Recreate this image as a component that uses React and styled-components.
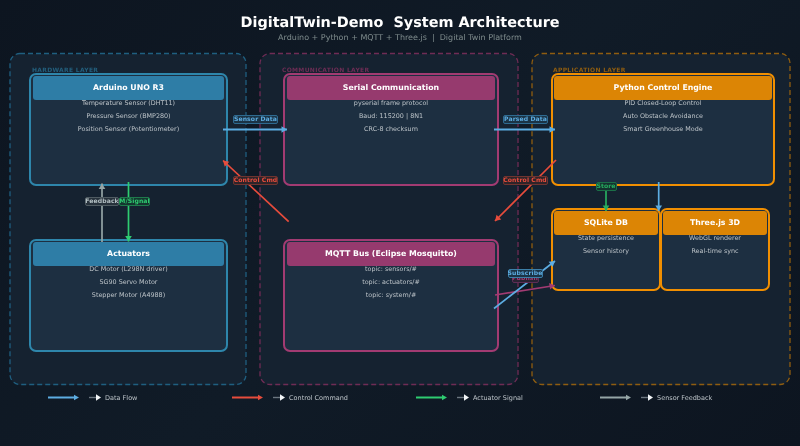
import React from "react";
import styled, { createGlobalStyle } from "styled-components";

const Global = createGlobalStyle`
  html, body { margin: 0; padding: 0; background: #0e1722; }
  #root { width: 800px; height: 446px; overflow: hidden; }
`;

const Page = styled.div`
  position: relative;
  width: 800px;
  height: 446px;
  overflow: hidden;
  background: linear-gradient(135deg, #0d1520 0%, #101b27 50%, #0d1520 100%);
  font-family: "DejaVu Sans", sans-serif;
  text-rendering: geometricPrecision;
  filter: blur(0.3px);
`;

const Header = styled.header`
  height: 54px;
  box-sizing: border-box;
  padding-top: 14px;
  text-align: center;
`;

const Title = styled.h1`
  margin: 0;
  font-size: 14.4px;
  line-height: 18px;
  font-weight: 700;
  color: #ffffff;
  white-space: pre;
`;

const Subtitle = styled.div`
  font-size: 8px;
  line-height: 12px;
  color: #7f8c8d;
  white-space: pre;
`;

const Columns = styled.main`
  display: flex;
  gap: 14px;
  height: 331px;
  padding-left: 10px;
`;

const Layer = styled.section`
  position: relative;
  box-sizing: border-box;
  width: ${(p) => p.$width}px;
  padding: 1px 0 0 ${(p) => p.$inset}px;
  background: #152230;
  border-radius: 10px;
`;

const DashFrame = styled.svg`
  position: absolute;
  left: 0;
  top: 0;
  width: 100%;
  height: 100%;
  overflow: visible;
`;

const LayerLabel = styled.div`
  height: 6px;
  margin-left: ${(p) => p.$shift}px;
  padding-top: 12px;
  font-size: 6px;
  line-height: 8px;
  font-weight: 700;
  letter-spacing: 0.3px;
  color: ${(p) => p.$color};
  white-space: nowrap;
`;

const Stack = styled.div`
  display: flex;
  flex-direction: column;
  gap: ${(p) => p.$gap}px;
  width: ${(p) => p.$width}px;
`;

const Card = styled.article`
  position: relative;
  box-sizing: border-box;
  width: ${(p) => p.$width || "auto"};
  height: ${(p) => p.$height}px;
  padding: 1px ${(p) => p.$pad}px;
  background: #1d2f41;
  border: 2px solid ${(p) => p.$border};
  border-radius: 7px;
`;

const CardHead = styled.div`
  height: 24px;
  line-height: 23px;
  text-align: center;
  font-size: 7.8px;
  font-weight: 700;
  color: #ffffff;
  background: ${(p) => p.$fill};
  border-radius: 3px;
  margin-bottom: -3px;
`;

const CardLine = styled.div`
  height: 13px;
  line-height: 13px;
  text-align: center;
  font-size: 6.4px;
  color: #bcc3c8;
  white-space: nowrap;
`;

const SubRow = styled.div`
  display: flex;
  & > * + * {
    margin-left: -1px;
  }
`;

const Legend = styled.footer`
  display: grid;
  grid-template-columns: repeat(4, 184px);
  padding: 6px 0 0 48px;
`;

const LegendItem = styled.div`
  display: flex;
  align-items: center;
  height: 13px;
`;

const LegendText = styled.span`
  margin-left: 4px;
  font-size: 6.5px;
  color: #bcc3c8;
  white-space: nowrap;
`;

const Overlay = styled.svg`
  position: absolute;
  left: 0;
  top: 0;
  width: 800px;
  height: 446px;
  pointer-events: none;
`;

const FlowTag = styled.span`
  position: absolute;
  left: ${(p) => p.$x}px;
  top: ${(p) => p.$y}px;
  width: ${(p) => p.$w}px;
  height: 9px;
  box-sizing: border-box;
  display: flex;
  align-items: center;
  justify-content: center;
  font-size: 6.1px;
  font-weight: 700;
  letter-spacing: 0.1px;
  color: ${(p) => p.$color};
  background: ${(p) => p.$bg};
  border: 1px solid ${(p) => p.$edge};
  border-radius: 2px;
  white-space: nowrap;
`;

const BLUE = "#5dade2";
const RED = "#e74c3c";
const GREEN = "#2ecc71";
const GREY = "#95a5a6";
const PINK = "#a23b72";
const DGREEN = "#27ae60";

function Head({ x1, y1, x2, y2, color, size = 5.5 }) {
  const a = Math.atan2(y2 - y1, x2 - x1);
  const w = size * 0.6;
  const bx = x2 - Math.cos(a) * size;
  const by = y2 - Math.sin(a) * size;
  const px = -Math.sin(a) * w;
  const py = Math.cos(a) * w;
  return <polygon points={`${x2},${y2} ${bx + px},${by + py} ${bx - px},${by - py}`} fill={color} />;
}

function Flow({ x1, y1, x2, y2, color, width = 1.7 }) {
  return (
    <g>
      <line x1={x1} y1={y1} x2={x2} y2={y2} stroke={color} strokeWidth={width} />
      <Head x1={x1} y1={y1} x2={x2} y2={y2} color={color} />
    </g>
  );
}

const flows = [
  { x1: 223, y1: 129.5, x2: 287, y2: 129.5, color: BLUE, width: 2 },
  { x1: 494, y1: 129.5, x2: 555, y2: 129.5, color: BLUE, width: 2 },
  { x1: 288.7, y1: 221.7, x2: 223, y2: 160.5, color: RED },
  { x1: 556, y1: 160, x2: 495, y2: 221, color: RED },
  { x1: 102, y1: 242, x2: 102, y2: 183.5, color: GREY },
  { x1: 128.5, y1: 182, x2: 128.5, y2: 241.5, color: GREEN },
  { x1: 606, y1: 186, x2: 606, y2: 211, color: DGREEN },
  { x1: 658.7, y1: 182, x2: 658.7, y2: 211, color: BLUE },
  { x1: 495, y1: 295, x2: 555, y2: 285.5, color: PINK },
  { x1: 494, y1: 308.5, x2: 555, y2: 261, color: BLUE },
];

const tags = [
  { text: "Sensor Data", x: 233, y: 114.5, w: 45, color: BLUE, bg: "#1b3446", edge: "#2e6a90" },
  { text: "Parsed Data", x: 503, y: 114.5, w: 45, color: BLUE, bg: "#1b3446", edge: "#2e6a90" },
  { text: "Control Cmd", x: 233, y: 175.5, w: 45, color: RED, bg: "#2f2429", edge: "#6f3430" },
  { text: "Control Cmd", x: 502.5, y: 175.5, w: 45, color: RED, bg: "#2f2429", edge: "#6f3430" },
  { text: "Feedback", x: 85, y: 197, w: 34, color: "#b4c0c4", bg: "#27323c", edge: "#4f5b62" },
  { text: "M/Signal", x: 119, y: 197, w: 31, color: GREEN, bg: "#14372f", edge: "#1f7a4c" },
  { text: "Store", x: 595.5, y: 182, w: 21, color: DGREEN, bg: "#14332e", edge: "#1b6f47" },
  { text: "Publish", x: 511.5, y: 274, w: 27, color: PINK, bg: "#2a2333", edge: "#5e2d56" },
  { text: "Subscribe", x: 507.5, y: 269, w: 35, color: BLUE, bg: "#1b3446", edge: "#3c7fa8" },
];

const legend = [
  { label: "Data Flow", color: BLUE },
  { label: "Control Command", color: RED },
  { label: "Actuator Signal", color: GREEN },
  { label: "Sensor Feedback", color: GREY },
];

function LegendMark({ color }) {
  return (
    <svg width="53" height="9" viewBox="0 0 53 9">
      <line x1="0" y1="4.5" x2="28" y2="4.5" stroke={color} strokeWidth="2" />
      <polygon points="31,4.5 26,1.8 26,7.2" fill={color} />
      <line x1="41" y1="4.5" x2="49" y2="4.5" stroke="#6b7680" strokeWidth="1.4" />
      <polygon points="53,4.5 48,1.2 48,7.8" fill="#f2f5f7" />
    </svg>
  );
}

function Frame({ w, color }) {
  return (
    <DashFrame viewBox={`0 0 ${w} 331`}>
      <rect x="0" y="-0.5" width={w} height="331" rx="10" fill="none" stroke={color} strokeWidth="1.3" strokeDasharray="5 3" />
    </DashFrame>
  );
}

function Box({ title, lines, border, fill, pad, height = 113, width }) {
  return (
    <Card $border={border} $height={height} $width={width} $pad={pad}>
      <CardHead $fill={fill}>{title}</CardHead>
      {lines.map((l) => (
        <CardLine key={l}>{l}</CardLine>
      ))}
    </Card>
  );
}

export default function App() {
  const B = { border: "#2e86ab", fill: "#2e7da6", pad: 2 };
  const P = { border: "#a23b72", fill: "#963a6e", pad: 2 };
  const O = { border: "#f18f01", fill: "#dc8505", pad: 1 };
  return (
    <Page>
      <Global />
      <Header>
        <Title>{"DigitalTwin-Demo  System Architecture"}</Title>
        <Subtitle>{"Arduino + Python + MQTT + Three.js  |  Digital Twin Platform"}</Subtitle>
      </Header>
      <Columns>
        <Layer $width={236} $inset={19}>
          <Frame w={236} color="#1f5f80" />
          <LayerLabel $color="#235f7d" $shift={3}>HARDWARE LAYER</LayerLabel>
          <Stack $gap={53} $width={199}>
            <Box {...B} title="Arduino UNO R3" lines={["Temperature Sensor (DHT11)", "Pressure Sensor (BMP280)", "Position Sensor (Potentiometer)"]} />
            <Box {...B} title="Actuators" lines={["DC Motor (L298N driver)", "SG90 Servo Motor", "Stepper Motor (A4988)"]} />
          </Stack>
        </Layer>
        <Layer $width={258} $inset={23}>
          <Frame w={258} color="#6f2c55" />
          <LayerLabel $color="#6e2d55" $shift={-1}>COMMUNICATION LAYER</LayerLabel>
          <Stack $gap={53} $width={216}>
            <Box {...P} title="Serial Communication" lines={["pyserial frame protocol", "Baud: 115200 | 8N1", "CRC-8 checksum"]} />
            <Box {...P} title="MQTT Bus (Eclipse Mosquitto)" lines={["topic: sensors/#", "topic: actuators/#", "topic: system/#"]} />
          </Stack>
        </Layer>
        <Layer $width={258} $inset={19}>
          <Frame w={258} color="#8f5d10" />
          <LayerLabel $color="#8f5d10" $shift={2}>APPLICATION LAYER</LayerLabel>
          <Stack $gap={22} $width={224}>
            <Box {...O} title="Python Control Engine" lines={["PID Closed-Loop Control", "Auto Obstacle Avoidance", "Smart Greenhouse Mode"]} />
            <SubRow>
              <Box {...O} width="110px" height={83} title="SQLite DB" lines={["State persistence", "Sensor history"]} />
              <Box {...O} width="110px" height={83} title="Three.js 3D" lines={["WebGL renderer", "Real-time sync"]} />
            </SubRow>
          </Stack>
        </Layer>
      </Columns>
      <Legend>
        {legend.map((l) => (
          <LegendItem key={l.label}>
            <LegendMark color={l.color} />
            <LegendText>{l.label}</LegendText>
          </LegendItem>
        ))}
      </Legend>
      <Overlay viewBox="0 0 800 446">
        {flows.map((f, i) => (
          <Flow key={i} {...f} />
        ))}
      </Overlay>
      {tags.map((t) => (
        <FlowTag key={t.text + t.x} $x={t.x} $y={t.y} $w={t.w} $color={t.color} $bg={t.bg} $edge={t.edge}>
          {t.text}
        </FlowTag>
      ))}
    </Page>
  );
}
